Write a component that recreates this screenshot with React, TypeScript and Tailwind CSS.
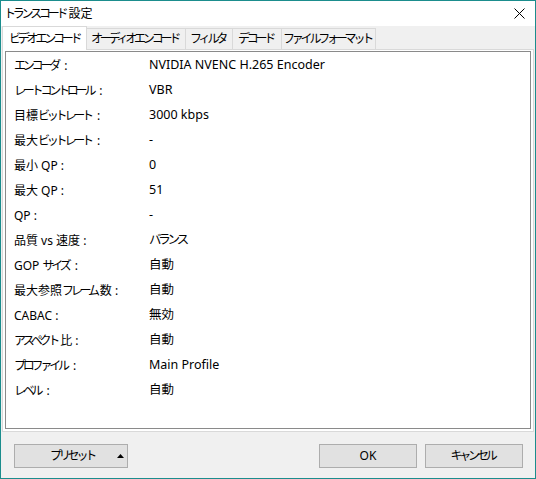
import React from 'react';

const rows: [string, string][] = [
    ['エンコーダ :', 'NVIDIA NVENC H.265 Encoder'],
    ['レートコントロール :', 'VBR'],
    ['目標ビットレート :', '3000 kbps'],
    ['最大ビットレート :', '-'],
    ['最小 QP :', '0'],
    ['最大 QP :', '51'],
    ['QP :', '-'],
    ['品質 vs 速度 :', 'バランス'],
    ['GOP サイズ :', '自動'],
    ['最大参照フレーム数 :', '自動'],
    ['CABAC :', '無効'],
    ['アスペクト比 :', '自動'],
    ['プロファイル :', 'Main Profile'],
    ['レベル :', '自動'],
];

const tabs = [
    {label: 'ビデオエンコード', w: 'w-[85px]'},
    {label: 'オーディオエンコード', w: 'w-[99px]'},
    {label: 'フィルタ', w: 'w-[47px]'},
    {label: 'デコード', w: 'w-[49px]'},
    {label: 'ファイルフォーマット', w: 'w-[94px]'},
];

// katakana in the screenshot is much narrower than Noto CJK, squeeze it
function Jp({text}: {text: string}) {
    const parts = text.split(/([\u30A0-\u30FF]+)/);
    return (
        <>
            {parts.map((p, i) =>
                /[\u30A0-\u30FF]/.test(p) ? (
                    <span key={i} className="tracking-[-3.2px] mr-[3px]">{p}</span>
                ) : (
                    <span key={i}>{p}</span>
                )
            )}
        </>
    );
}

export default function App() {
    return (
        <div
            className="w-[536px] h-[479px] flex flex-col border border-[#1b8d8d] bg-[#f0f0f0] text-[12px] text-black"
            style={{fontFamily: '"Noto Sans", "Noto Sans CJK JP", sans-serif'}}
        >
            {/* title bar */}
            <div className="h-[25px] bg-white flex items-center justify-between pl-[3px] pr-[10px] shrink-0">
                <span className="leading-none whitespace-nowrap"><Jp text="トランスコード設定"/></span>
                <svg width="11" height="11" viewBox="0 0 11 11">
                    <path d="M0.5 0.5 L10.5 10.5 M10.5 0.5 L0.5 10.5" stroke="#000" strokeWidth="1"/>
                </svg>
            </div>

            {/* tabs */}
            <div className="h-[23px] flex items-end pl-[1px] shrink-0 relative z-10">
                {tabs.map((t, i) =>
                    i === 0 ? (
                        <div
                            key={t.label}
                            className={`${t.w} h-[24px] -mb-[1px] bg-white border border-b-0 border-[#d9d9d9] flex items-center pl-[6px] leading-none whitespace-nowrap`}
                        >
                            <Jp text={t.label}/>
                        </div>
                    ) : (
                        <div
                            key={t.label}
                            className={`${t.w} h-[21px] bg-[#f0f0f0] border border-l-0 border-b-0 border-[#d9d9d9] flex items-center justify-center leading-none whitespace-nowrap`}
                        >
                            <Jp text={t.label}/>
                        </div>
                    )
                )}
            </div>

            {/* tab page */}
            <div className="mx-[1px] h-[383px] border border-[#d9d9d9] bg-white pt-[1px] px-[2px] pb-[2px] shrink-0">
                <div className="h-full border border-[#8a8a8a] bg-white pl-[8px] pt-[1px]">
                    {rows.map(([k, v]) => (
                        <div key={k} className="h-[25px] flex items-center leading-none whitespace-nowrap">
                            <span className="w-[135px] shrink-0"><Jp text={k}/></span>
                            <span className="text-[12.5px]"><Jp text={v}/></span>
                        </div>
                    ))}
                </div>
            </div>

            {/* footer */}
            <div className="flex items-start pt-[12px] pl-[13px] pr-[12px]">
                <button className="w-[114px] h-[24px] bg-[#e1e1e1] border border-[#adadad] flex items-center leading-none">
                    <span className="flex-1 pl-[35px] text-left whitespace-nowrap"><Jp text="プリセット"/></span>
                    <svg width="7" height="4" viewBox="0 0 7 4" className="mr-[3px]">
                        <path d="M0 4 L3.5 0 L7 4 Z" fill="#000"/>
                    </svg>
                </button>
                <div className="flex-1"/>
                <button className="w-[98px] h-[24px] bg-[#e1e1e1] border border-[#adadad] leading-none">OK</button>
                <button className="ml-[8px] w-[98px] h-[24px] bg-[#e1e1e1] border border-[#adadad] leading-none whitespace-nowrap">
                    <Jp text="キャンセル"/>
                </button>
            </div>
        </div>
    );
}
